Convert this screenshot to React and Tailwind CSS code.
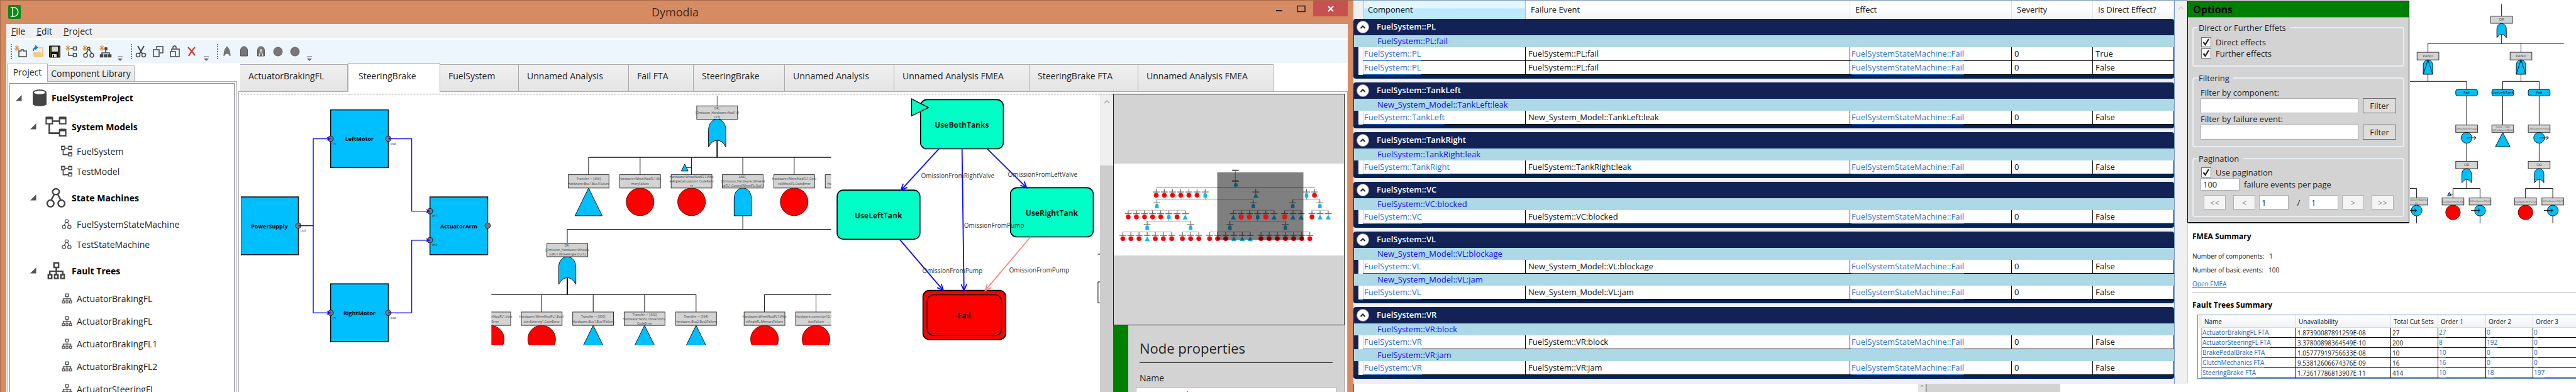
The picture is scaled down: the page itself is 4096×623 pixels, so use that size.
import React from "react";

/* ---------- shared data ---------- */

const ZOOM = 0.8312;
const z = (v) => Math.round(v * ZOOM * 10) / 10;

const INK = "#111111";
const SKY = "#00bfff";
const MINT = "#00ffc6";

/* ---------- small icons ---------- */

function ModelIcon({ size, weight = 1.5 }) {
  return (
    <svg width={size} height={size} viewBox="0 0 24 24" fill="none" stroke="#444" strokeWidth={weight}>
      <path d="M8 6h8M4.500 9v10.500h11.500" strokeWidth={weight + 0.3} />
      <path d="M1 2h7v7H1zM16 2h7v7h-7zM16 15.500h7v7h-7z" fill="#fff" />
      <path d="M1 2.500h7M16 2.500h7M16 16h7" strokeWidth={weight + 1.4} />
    </svg>
  );
}

function StateIcon({ size, weight = 1.8 }) {
  return (
    <svg width={size} height={size} viewBox="0 0 24 24" fill="none" stroke="#444" strokeWidth={weight}>
      <path d="M10 8 6 15.500M14 8l4 7.500" />
      <ellipse cx="12" cy="5" rx="4" ry="3.500" />
      <circle cx="5.500" cy="19" r="4" />
      <circle cx="18.500" cy="19" r="4" />
    </svg>
  );
}

function FaultIcon({ size, weight = 1.8 }) {
  return (
    <svg width={size} height={size} viewBox="0 0 24 24" fill="none" stroke="#444" strokeWidth={weight}>
      <path d="M9 1.500h6v6H9zM12 7.500v9M3.500 17v-4.500h17V17" />
      <path d="M1.500 17h4.500v5H1.500zM9.750 17h4.500v5h-4.500zM18 17h4.500v5H18z" />
    </svg>
  );
}

function Spark() {
  return <path d="M4 0v9M0 4.500h8M1 1.500l6 6M7 1.500l-6 6" stroke="#e0922f" strokeWidth="1.100" fill="none" />;
}

function ToolSvg({ children }) {
  return (
    <svg width="20" height="20" viewBox="0 0 20 20" fill="none" stroke="#444" strokeWidth="1.500">
      {children}
    </svg>
  );
}

const fileTools = [
  ["New project", <><path d="M7 9h3.500v-2h3.500v2h5v9H7z" /><Spark /></>],
  ["Open project", <><path d="M2 11h13l3 8H4z" fill="#f6c98b" stroke="none" /><path d="M11 4h7v14" stroke="#f6c98b" strokeWidth="2" /><path d="M3 9c0-4 2-5.500 5-5.500M6 .5l3 3-3 3" stroke="#1f6fb5" strokeWidth="2" /></>],
  ["Save", <><path d="M1.500 1h17v18h-17z" fill="#111" stroke="#111" strokeWidth="1" /><path d="M3 2v16M17 2v16" stroke="#8a8a1c" strokeWidth="1" /><path d="M5 2h10v8H5z" fill="#d8d8d8" stroke="none" /><path d="M6 14h7v5H6z" fill="#ddd" stroke="none" /><path d="M7 15h2v4H7z" fill="#111" stroke="none" /></>],
  ["New system model", <><path d="M5 10v6h7M8 5h4" /><path d="M12.500 2.500h5v5h-5zM12.500 13h5v5h-5z" /><Spark /></>],
  ["New state machine", <><path d="M9 8l-3 5M11 7l4 6" /><circle cx="10" cy="5" r="2" /><circle cx="5" cy="16" r="3" /><circle cx="15" cy="16" r="3" /><Spark /></>],
  ["New fault tree", <><path d="M10 3v9M4 15v-3h12v3" /><path d="M1.500 15h4v3.500h-4zM8 15h4v3.500H8zM14.500 15h4v3.500h-4zM9 4h3v3H9z" fill="#444" /><Spark /></>],
];

const editTools = [
  ["Cut", <><path d="M5 1l7 12M15 1L8 13" strokeWidth="2" /><circle cx="5.500" cy="15.500" r="3" /><circle cx="14.500" cy="15.500" r="3" /></>],
  ["Copy", <><path d="M8 6V2h10v10h-5" /><path d="M3 7h9v11H3z" /></>],
  ["Paste", <><path d="M7 5V3.500a2.500 2.500 0 0 1 5 0V5M5 9V6h12v12h-5M3 10h8v8H3z" /></>],
  ["Delete", <path d="M4 3c4 4 7 8 11 13M15 3C11 7 8 12 5 17" stroke="#c0392b" strokeWidth="2.200" />],
];

const gateTools = [
  ["OR gate", <path d="M10 2c4 4 5 9 5 15-1.500-3-3-4-5-4s-3.500 1-5 4c0-6 1-11 5-15z" fill="#777" stroke="#666" strokeWidth="1" />],
  ["AND gate", <path d="M4.500 17V8c0-4 3-6 5.500-6s5.500 2 5.500 6v9z" fill="#777" stroke="#555" strokeWidth="1" />],
  ["PAND gate", <><path d="M4.500 17V8c0-4 3-6 5.500-6s5.500 2 5.500 6v9z" fill="#777" stroke="#555" strokeWidth="1" /><path d="M7 17l3-11 3 11" stroke="#fff" strokeWidth="1" /></>],
  ["Basic event", <circle cx="10" cy="10" r="7" fill="#777" stroke="#666" strokeWidth="1" />],
  ["Output event", <circle cx="10" cy="10" r="7" fill="#777" stroke="#666" strokeWidth="1" />],
];

function Grip() {
  return <span className="h-6 border-l-2 border-dotted border-[#777]" />;
}

function ToolGroup({ tools }) {
  return (
    <div className="flex items-center pl-[7px]">
      <Grip />
      <div className="flex">
        {tools.map(([name, art]) => (
          <button key={name} aria-label={name} className="flex h-7 w-[27px] items-center justify-center">
            <ToolSvg>{art}</ToolSvg>
          </button>
        ))}
      </div>
      <button aria-label="More tools" className="flex h-[34px] w-5 items-end justify-center">
        <svg width="10" height="10" viewBox="0 0 10 10">
          <path d="M1 1h8" stroke="#666" />
          <path d="M1 4h8l-4 4z" fill="#666" />
        </svg>
      </button>
    </div>
  );
}

/* ---------- project tree ---------- */

function Arrow() {
  return (
    <svg width="10" height="10" viewBox="0 0 10 10" className="shrink-0">
      <path d="M9.500 0v9.500H0z" fill="#555" />
    </svg>
  );
}

function TreeGroup({ icon, label, items, itemIcon, head = "h-[52px]", row = "h-8" }) {
  return (
    <li>
      <div className={`flex items-center pl-[32px] ${head}`}>
        <Arrow />
        <span className="ml-2.5 flex w-[42px] justify-center">{icon}</span>
        <span className="ml-1 font-bold text-black">{label}</span>
      </div>
      <ul>
        {items.map((item, i) => (
          <li key={i} className={`flex items-center pl-[80px] ${row}`}>
            <span className="flex w-5 justify-center">{itemIcon}</span>
            <span className="ml-[6px]">{item}</span>
          </li>
        ))}
      </ul>
    </li>
  );
}

function Sidebar() {
  return (
    <aside className="flex w-[367px] shrink-0 flex-col overflow-hidden pl-px pt-px">
      <div role="tablist" className="z-10 -mb-px flex items-end">
        <button role="tab" aria-selected="true" className="h-[29px] w-[65px] border border-b-0 border-[#acacac] bg-white pb-1">Project</button>
        <button role="tab" aria-selected="false" className="h-[26px] w-[138px] border border-l-0 border-[#acacac] bg-gradient-to-b from-[#f0f0f0] to-[#e5e5e5] pb-0.5">Component Library</button>
      </div>
      <div className="min-h-0 flex-1 border border-b-0 border-[#acacac] px-[3px] pt-[2px]">
        <div className="h-full overflow-hidden border border-b-0 border-[#828790]">
          <div className="flex h-[45px] items-center pl-[9px]">
            <Arrow />
            <svg width="26" height="28" viewBox="0 0 26 28" className="ml-[15px] shrink-0">
              <path d="M2 5v18c0 5 22 5 22 0V5z" fill="#444" />
              <ellipse cx="13" cy="5" rx="10" ry="3.800" fill="#fff" stroke="#444" strokeWidth="2" />
            </svg>
            <span className="ml-1.5 font-bold text-black">FuelSystemProject</span>
          </div>
          <ul>
            <TreeGroup head="h-[46px]" icon={<ModelIcon size={34} />} itemIcon={<ModelIcon size={18} weight={1.8} />} label="System Models" items={["FuelSystem", "TestModel"]} />
            <TreeGroup icon={<StateIcon size={32} />} itemIcon={<StateIcon size={16} />} label="State Machines" items={["FuelSystemStateMachine", "TestStateMachine"]} />
            <TreeGroup
              row="h-9"
              icon={<FaultIcon size={29} weight={2} />}
              itemIcon={<FaultIcon size={17} />}
              label="Fault Trees"
              items={["ActuatorBrakingFL", "ActuatorBrakingFL", "ActuatorBrakingFL1", "ActuatorBrakingFL2", "ActuatorSteeringFL"]}
            />
          </ul>
        </div>
      </div>
    </aside>
  );
}

/* ---------- diagrams ---------- */

function Label({ x, y, lines, size = "text-[5px]", gap = 6, bold, anchor = "middle", fill = "#333" }) {
  return lines.map((line, i) => (
    <text
      key={i}
      x={z(x)}
      y={z(y) + (i - (lines.length - 1) / 2) * gap}
      textAnchor={anchor}
      dominantBaseline="central"
      fill={fill}
      className={bold ? `${size} font-bold` : size}
    >
      {line}
    </text>
  ));
}

const line = (...pts) => pts.map(([x, y], i) => `${i ? "L" : "M"}${z(x)} ${z(y)}`).join("");

function Wire({ pts, color = INK, width = 1 }) {
  return <path d={line(...pts)} fill="none" stroke={color} strokeWidth={width} />;
}

function Tri({ x, y, w, h }) {
  return <path d={line([x, y], [x + w, y + h], [x - w, y + h]) + "Z"} fill={SKY} stroke={INK} />;
}

function Gate({ kind, x, y, w, h }) {
  const l = z(x - w), r = z(x + w), t = z(y), b = z(y + h), sh = z(y + h * 0.4), cx = z(x);
  const foot = kind === "or" ? `Q${z(x + w * 0.6)} ${z(y + h * 0.76)} ${cx} ${z(y + h * 0.76)}Q${z(x - w * 0.6)} ${z(y + h * 0.76)} ${l} ${b}` : `L${l} ${b}`;
  return (
    <g stroke={INK} fill={SKY}>
      <path d={`M${l} ${b}V${sh}C${l} ${z(y + h * 0.13)} ${z(x - w * 0.5)} ${t} ${cx} ${t}S${r} ${z(y + h * 0.13)} ${r} ${sh}V${b}${foot}Z`} />
      {kind === "pand" && <path d={`M${l} ${b}L${cx} ${t}L${r} ${b}`} fill="none" />}
    </g>
  );
}

function Box({ x, y, w, h, lines, size, gap }) {
  return (
    <g>
      <rect x={z(x - w / 2)} y={z(y)} width={z(w)} height={z(h)} fill="#d3d3d3" stroke="#333" />
      <Label x={x} y={y + h / 2} lines={lines} size={size} gap={gap} fill="#444" />
    </g>
  );
}

function ModelBlock({ x, y, name }) {
  return (
    <g>
      <rect x={z(x)} y={z(y)} width={z(110.4)} height={z(110.4)} fill={SKY} stroke="#111" strokeWidth="1.500" />
      <Label x={x + 55} y={y + 55.500} lines={[name]} size="text-[9px]" bold fill="#000" />
    </g>
  );
}

function Port({ x, y, name, arrow }) {
  return (
    <g>
      <circle cx={z(x)} cy={z(y)} r="4.400" fill="#777" stroke="#111" />
      {arrow && <path d={line([x - 8, y - 4], [x + 1, y], [x - 8, y + 4], [x - 5, y]) + "Z"} fill="#1414f0" />}
      <Label x={x + 4} y={y + 9} lines={[name]} size="text-[6px]" anchor="start" />
    </g>
  );
}

function SystemModel() {
  const blue = "#1414f0";
  return (
    <g>
      <ModelBlock x={460.4} y={376.600} name="PowerSupply" />
      <ModelBlock x={632.500} y={210} name="LeftMotor" />
      <ModelBlock x={632.500} y={542.700} name="RightMotor" />
      <ModelBlock x={822.500} y={376.600} name="ActuatorArm" />
      <Port x={570.700} y={431.600} name="out" />
      <Port x={632.500} y={265.300} name="in" arrow />
      <Port x={742.900} y={265.300} name="out" />
      <Port x={632.500} y={598} name="in" arrow />
      <Port x={742.900} y={598} name="out" />
      <Port x={822.500} y={403.700} name="in1" arrow />
      <Port x={822.500} y={459.200} name="in2" arrow />
      <Port x={932.900} y={431.600} name="" />
      <Wire color={blue} width={1.4} pts={[[570.7, 431.6], [599.3, 431.6]]} />
      <Wire color={blue} width={1.4} pts={[[632, 265.3], [599.3, 265.3], [599.3, 598], [632, 598]]} />
      <Wire color={blue} width={1.4} pts={[[742.9, 265.3], [787.5, 265.3], [787.5, 403.7], [822, 403.7]]} />
      <Wire color={blue} width={1.4} pts={[[742.9, 598], [787.5, 598], [787.5, 459.2], [822, 459.2]]} />
    </g>
  );
}

function TreeEvent({ kind, x, y, lines }) {
  return (
    <g>
      {kind === "basic" && <circle cx={z(x)} cy={z(y + 52)} r={z(26.500)} fill="#ff0000" stroke="#600" />}
      {kind === "transfer" && <Tri x={x} y={y + 25.500} w={26} h={53} />}
      {(kind === "or" || kind === "and") && <Gate kind={kind} x={x} y={y + 25.500} w={16.500} h={53} />}
      <Box x={x} y={y} w={78} h={25.500} lines={lines} gap={lines.length > 2 ? 7 : 8} />
    </g>
  );
}

const faultRow = [
  ["transfer", 1126, ["Transfer -> [306]", "Hardware::Bus1.Bus1Failure"]],
  ["basic", 1224.5, ["Hardware::WheelNodFL1.Me", "moryFailure"]],
  ["basic", 1322.9, ["Hardware::WheelNodFL1.Whe", "elAngleCalculation1.CodeFailu", "re"]],
  ["and", 1420.9, ["AND_", "[Omission_Hardware::WheelN", "odFL1.ControlWheelFL.Out1]"]],
  ["basic", 1519.3, ["Hardware::WheelNodFL1.Cont", "rolWheelFL.CodeError"]],
  ["basic", 1617.7, ["", "Hardware::WheelNodFL1"]],
];

const faultLeaves = [
  ["basic", 937.9, ["Hardware::WheelNodFL1.Vote", "r.CodeError"]],
  ["basic", 1036.2, ["Hardware::WheelNodFL1.BusV", "oterSteering1.CodeError"]],
  ["transfer", 1134.7, ["Transfer -> [306]", "Hardware::Bus1.Bus1Failure"]],
  ["transfer", 1233, ["Transfer -> [332]", "Hardware::Nod2.conversion2.", "CodeError"]],
  ["transfer", 1331.6, ["Transfer -> [334]", "Hardware::Bus2.Bus2Failure"]],
  ["basic", 1462.5, ["Hardware::WheelNodFL1.Whe", "elAngleFL.MemoryFailure"]],
  ["basic", 1561, ["Hardware::conection12.Con", "tionFailure"]],
];

function FaultTree() {
  return (
    <g clipPath="url(#fault-clip)">
      <clipPath id="fault-clip">
        <rect x={z(940)} y={z(183)} width={z(650)} height={z(477)} />
      </clipPath>
      <Wire pts={[[1371.900, 183], [1371.900, 203]]} color="#555" />
      <Wire pts={[[1126, 300.800], [1600, 300.800]]} width={1.300} />
      {faultRow.map(([kind, x, lines]) => (
        <g key={x}>
          <Wire pts={[[x, 300.8], [x, 334]]} />
          <TreeEvent kind={kind} x={x} y={334} lines={lines} />
        </g>
      ))}
      <TreeEvent kind="or" x={1371.900} y={202.500} lines={["OR_", "[Omission_Hardware::Nod1.O", "ut3]"]} />
      <Wire pts={[[1371.900, 268], [1371.900, 300.800]]} width={2} />
      <Wire pts={[[1309.900, 320.700], [1322.900, 320.700]]} />
      <Tri x={1309.900} y={314} w={6.500} h={13} />
      <Wire pts={[[1420.9, 412.500], [1420.9, 438.600]]} />
      <Wire pts={[[1600, 438.6], [1085.2, 438.6], [1085.2, 465]]} />
      <TreeEvent kind="or" x={1085.200} y={465.300} lines={["OR_", "[Omission_Hardware::WheelN", "odFL1.WheelAngle.Out1]"]} />
      <Wire pts={[[1085.200, 531], [1085.200, 563.300]]} width={2} />
      <Wire pts={[[930, 563.300], [1331.600, 563.300]]} width={1.300} />
      <Wire pts={[[1462.500, 563.300], [1600, 563.300]]} width={1.300} />
      {faultLeaves.map(([kind, x, lines]) => (
        <g key={x}>
          <Wire pts={[[x, 563.3], [x, 597]]} />
          <TreeEvent kind={kind} x={x} y={596.600} lines={lines} />
        </g>
      ))}
    </g>
  );
}

function Edge({ from, to, color = "#0a0af5" }) {
  const a = Math.atan2(to[1] - from[1], to[0] - from[0]);
  const barb = (d) => [to[0] - 13 * Math.cos(a + d), to[1] - 13 * Math.sin(a + d)];
  return (
    <g fill="none" stroke={color} strokeWidth="1.800">
      <path d={line(from, to)} />
      <path d={line(barb(0.42), to, barb(-0.42))} />
    </g>
  );
}

function StateBox({ x, y, name, fail }) {
  return (
    <g>
      <rect x={z(x)} y={z(y)} width={z(158.400)} height={z(94)} rx="10" fill={fail ? "#ff0000" : MINT} stroke="#000" strokeWidth="1.600" />
      {fail && <rect x={z(x + 8)} y={z(y + 8.400)} width={z(142.300)} height={z(77.700)} rx="10" fill="none" stroke="#000" strokeWidth="1.600" />}
      <Label x={x + 79} y={y + 48} lines={[name]} size="text-[12px]" bold fill="#0a1a14" />
    </g>
  );
}

function StateMachine() {
  return (
    <g>
      <StateBox x={1761} y={190.600} name="UseBothTanks" />
      <StateBox x={1601.400} y={363.500} name="UseLeftTank" />
      <StateBox x={1933} y={359} name="UseRightTank" />
      <StateBox x={1765.600} y={555.300} name="Fail" fail />
      <path d={line([1743.900, 189], [1776.300, 205.900], [1743.900, 221.600]) + "Z"} fill={MINT} stroke="#000" strokeWidth="1.300" />
      <Edge from={[1795.9, 284.7]} to={[1723.6, 363.5]} />
      <Edge from={[1840.3, 284.7]} to={[1844.1, 555.3]} />
      <Edge from={[1888.6, 284.7]} to={[1964, 359]} />
      <Edge from={[1720.9, 457.5]} to={[1804.5, 555.5]} />
      <Edge from={[1971.5, 453]} to={[1884.8, 555.5]} color="#fa8484" />
      <Label x={1761.800} y={335.600} lines={["OmissionFromRightValve"]} size="text-[10px]" anchor="start" />
      <Label x={1927.800} y={333} lines={["OmissionFromLeftValve"]} size="text-[10px]" anchor="start" />
      <Label x={1844} y={431} lines={["OmissionFromPump"]} size="text-[10px]" anchor="start" />
      <Label x={1764.200} y={517.800} lines={["OmissionFromPump"]} size="text-[10px]" anchor="start" />
      <Label x={1930.200} y={516} lines={["OmissionFromPump"]} size="text-[10px]" anchor="start" />
    </g>
  );
}

/* ---------- overview map ---------- */

const mapNodes = {
  779: { basic: [364, 411, 458, 505, 552, 599, 1275], gate: [646, 1229], tri: [937] },
  822: { basic: [], gate: [368, 923, 1150, 1306], tri: [] },
  866: { basic: [203, 250, 297, 343, 390, 484, 853, 901, 995, 1103, 1260], gate: [437, 948], tri: [531, 808, 1042, 1151, 1198, 1307, 1354] },
  909: { basic: [], gate: [312, 562, 788, 1107], tri: [] },
  953: { basic: [172, 218, 265, 359, 405, 453, 515, 562, 609, 671, 717, 764, 967, 1014, 1061, 1108, 1155, 1202, 1248], gate: [], tri: [312, 811, 859, 905] },
};
const mapRails = [
  [364, 1277, 749], [368, 923, 796], [1150, 1307, 796], [203, 531, 839], [808, 1042, 839], [1103, 1198, 839],
  [1260, 1354, 839], [312, 562, 883], [790, 1108, 883], [172, 453, 926], [515, 609, 926], [671, 905, 926], [967, 1248, 926],
];
const mx = (v) => Math.round((v - 120) * 2.7707) / 10;
const my = (v) => Math.round((v - 652) * 3.975) / 10;

function OverviewMap() {
  return (
    <svg viewBox="0 0 367 147" className="block w-full bg-white" role="img" aria-label="Overview">
      {mapRails.map(([a, b, y], i) => (
        <path key={i} d={`M${mx(a)} ${my(y)}H${mx(b)}`} stroke="#777" strokeWidth={i ? 0.6 : 0.9} />
      ))}
      <path d={`M${mx(820)} ${my(679)}V${my(749)}M${mx(647)} ${my(780)}V${my(796)}M${mx(1229)} ${my(780)}V${my(796)}M${mx(437)} ${my(866)}V${my(883)}M${mx(948)} ${my(866)}V${my(883)}`} stroke="#777" strokeWidth="0.800" />
      <path d={`M${mx(801)} ${my(679)}H${mx(839)}M${mx(801)} ${my(722)}H${mx(839)}`} stroke="#555" strokeWidth="2" />
      <path d={`M${mx(811)} ${my(744)}v-4q3-4 6 0v4z`} fill="#18b4ee" />
      {Object.entries(mapNodes).map(([row, kinds]) => {
        const y = Number(row);
        return (
          <g key={row}>
            {[...kinds.basic, ...kinds.gate, ...kinds.tri].map((x) => (
              <path key={x} d={`M${mx(x) - 5.5} ${my(y - 13)}h11M${mx(x)} ${my(y - 26)}v6`} stroke="#666" strokeWidth="1.200" />
            ))}
            {kinds.gate.map((x) => (
              <path key={x} d={`M${mx(x) - 2.8} ${my(y + 9)}v-5q2.800-5 5.600 0v5z`} fill="#18b4ee" />
            ))}
            {kinds.tri.map((x) => (
              <path key={x} d={`M${mx(x)} ${my(y - 10)}l4 8h-8z`} fill="#18b4ee" />
            ))}
            {kinds.basic.map((x) => (
              <circle key={x} cx={mx(x)} cy={my(y)} r="3.800" fill="#ff0000" />
            ))}
          </g>
        );
      })}
      <rect x={mx(715)} y={my(687)} width="137.400" height="108.100" fill="#000" fillOpacity="0.500" />
      {[853, 901, 995, 1103].map((x) => (
        <circle key={x} cx={mx(x)} cy={my(866)} r="3.800" fill="#f01010" />
      ))}
    </svg>
  );
}

/* ---------- modelling window ---------- */

const docTabs = [
  ["ActuatorBrakingFL", "w-[171px]"],
  ["SteeringBrake", "w-[147px]"],
  ["FuelSystem", "w-[125px]"],
  ["Unnamed Analysis", "w-[175px]"],
  ["Fail FTA", "w-[103px]"],
  ["SteeringBrake", "w-[145px]"],
  ["Unnamed Analysis", "w-[174px]"],
  ["Unnamed Analysis FMEA", "w-[215px]"],
  ["SteeringBrake FTA", "w-[173px]"],
  ["Unnamed Analysis FMEA", "w-[215px]"],
];

function Inspector() {
  return (
    <div className="flex w-[372px] shrink-0 flex-col pr-1">
      <div className="flex h-[368px] shrink-0 flex-col justify-center border border-[#222] bg-[#d3d3d3]">
        <OverviewMap />
      </div>
      <div className="min-h-0 flex-1 overflow-hidden border-l-[24px] border-r border-r-[#999] border-l-[#008000] bg-[#d3d3d3] pl-3 pr-3 pt-5">
        <h2 className="mx-1.5 border-b-2 border-[#555] pb-1.5 text-[22px] leading-[32px] text-[#222]">Node properties</h2>
        <label htmlFor="node-name" className="ml-1.5 mt-3.5 block text-[14px] leading-5">Name</label>
        <input id="node-name" defaultValue="SteeringBrake" className="mt-1 h-6 w-full border border-[#abadb3] bg-white px-[3px]" />
      </div>
    </div>
  );
}

function Workspace() {
  return (
    <main className="ml-[2px] flex min-w-0 flex-1 flex-col">
      <div role="tablist" className="z-10 -mb-px flex h-[46px] shrink-0 items-end pl-[3px]">
        {docTabs.map(([name, width], i) => (
          <button
            key={i}
            role="tab"
            aria-selected={i === 1}
            className={
              i === 1
                ? `h-[46px] shrink-0 border border-b-0 border-[#acacac] bg-white pb-1.5 pl-4 text-left ${width}`
                : `h-[44px] shrink-0 border border-l-0 border-[#acacac] bg-gradient-to-b from-[#f0f0f0] to-[#e4e4e4] pb-2 pl-[13px] text-left ${width}`
            }
          >
            {name}
          </button>
        ))}
      </div>
      <div className="flex min-h-0 flex-1 border border-b-0 border-[#acacac] pt-[3px]">
        <div className="ml-[3px] min-w-0 flex-1 overflow-hidden border-t border-dashed border-[#777]">
          <svg width="1368" height="474" viewBox="383 150 1368 474" role="img" aria-label="Diagram canvas" className="block">
            <SystemModel />
            <FaultTree />
            <StateMachine />
            <path d={line([2100, 486], [2106, 486])} stroke="#000" />
            <path d={line([2106, 539], [2100.500, 539], [2100.500, 579], [2106, 579])} stroke="#000" fill="none" />
          </svg>
        </div>
        <div className="flex w-[21px] shrink-0 flex-col border-t border-dashed border-[#777] bg-[#efefef]">
          <div className="flex h-[113px] justify-center pt-1.5">
            <svg width="12" height="12" viewBox="0 0 12 12" fill="none" stroke="#aaa" strokeWidth="1.600"><path d="M2 8l4-4 4 4" /></svg>
          </div>
          <div className="flex-1 bg-[#cdcdcd]" />
        </div>
        <Inspector />
      </div>
    </main>
  );
}

function ModelWindow() {
  return (
    <section className="flex min-w-0 flex-[2133_1_0%] flex-col overflow-hidden border-l border-t border-[#a86a48] bg-[#d68b62] pl-[9px] pr-2 text-[14px] text-[#222]">
      <header className="flex h-[37px] shrink-0 items-start">
        <svg width="20" height="22" viewBox="0 0 20 22" className="ml-[3px] mt-[7px]">
          <rect width="20" height="22" rx="2" fill="#0b8a16" />
          <path d="M4 4h5c9 0 9 14 0 14H4M7 4v14" stroke="#fff" strokeWidth="1.500" fill="none" />
        </svg>
        <h1 className="flex-1 pl-24 pt-1 text-center text-[18px] leading-7 text-[#3a2a20]">Dymodia</h1>
        <div className="flex">
          <button aria-label="Minimise" className="flex h-[25px] w-8 items-center justify-center">
            <svg width="12" height="12" viewBox="0 0 12 12"><path d="M1 9h10" stroke="#222" strokeWidth="2" /></svg>
          </button>
          <button aria-label="Maximise" className="flex h-[25px] w-[38px] items-center justify-center">
            <svg width="14" height="12" viewBox="0 0 14 12"><path d="M1 1.500h12v9H1z" stroke="#222" strokeWidth="1.500" fill="none" /></svg>
          </button>
          <button aria-label="Close" className="flex h-[25px] w-[55px] items-center justify-center bg-[#c75050]">
            <svg width="12" height="12" viewBox="0 0 12 12"><path d="M2 2l8 8M10 2l-8 8" stroke="#fff" strokeWidth="2" /></svg>
          </button>
        </div>
      </header>
      <div className="flex min-h-0 flex-1 flex-col bg-white">
        <nav className="flex h-[23px] shrink-0 items-center gap-[18px] bg-[#f0f0f0] pl-2">
          <button><u>F</u>ile</button>
          <button><u>E</u>dit</button>
          <button><u>P</u>roject</button>
        </nav>
        <div className="mt-[2px] flex h-[37px] shrink-0 items-center bg-[#edf5fd]">
          <ToolGroup tools={fileTools} />
          <ToolGroup tools={editTools} />
          <ToolGroup tools={gateTools} />
        </div>
        <div className="flex min-h-0 flex-1">
          <Sidebar />
          <Workspace />
        </div>
      </div>
    </section>
  );
}

/* ---------- failure modes table ---------- */

const fmea = [
  ["FuelSystem::PL", [["FuelSystem::PL:fail", ["True", "False"]]]],
  ["FuelSystem::TankLeft", [["New_System_Model::TankLeft:leak", ["False"]]]],
  ["FuelSystem::TankRight", [["FuelSystem::TankRight:leak", ["False"]]]],
  ["FuelSystem::VC", [["FuelSystem::VC:blocked", ["False"]]]],
  ["FuelSystem::VL", [["New_System_Model::VL:blockage", ["False"]], ["New_System_Model::VL:jam", ["False"]]]],
  ["FuelSystem::VR", [["FuelSystem::VR:block", ["False"]], ["FuelSystem::VR:jam", ["False"]]]],
];

function CellLink({ children }) {
  return (
    <a href="#" className="-mb-px inline-block h-[22px] border-b border-[#0a5cb8] align-top text-[#2873cf]">{children}</a>
  );
}

function FmeaGroup({ name, events }) {
  return (
    <tbody>
      <tr className="h-[26px] bg-[#122254]">
        <th colSpan={6} scope="rowgroup" className="rounded-t p-0 text-left font-semibold text-white">
          <div className="flex h-[26px] items-center">
            <button aria-label={`Collapse ${name}`} className="ml-[5px] flex h-5 w-5 items-center justify-center rounded-full border border-[#999] bg-white">
              <svg width="10" height="10" viewBox="0 0 10 10" fill="none" stroke="#222" strokeWidth="2"><path d="M1.500 7L5 3.500 8.500 7" /></svg>
            </button>
            <span className="ml-3">{name}</span>
          </div>
        </th>
      </tr>
      {events.map(([event, flags]) => (
        <React.Fragment key={event}>
          <tr className="h-[19px] bg-[#add8e6]">
            <td colSpan={6} className="h-[19px] border-l border-[#122254] p-0 pl-[37px] leading-[19px] text-[#1010ee]">{event}</td>
          </tr>
          {flags.map((flag, i) => (
            <tr key={i} className="h-[22px] bg-white leading-[21px]">
              <td className="border-l-[8px] border-r border-[#122254] border-r-[#ccc] p-0" />
              <td className="h-[22px] border-b border-r border-black p-0 pl-px"><CellLink>{name}</CellLink></td>
              <td className="border-b border-r border-black p-0 pl-1">{event}</td>
              <td className="border-b border-r border-black p-0 pl-[2px]"><CellLink>FuelSystemStateMachine::Fail</CellLink></td>
              <td className="border-b border-r border-black p-0 pl-1">0</td>
              <td className="border-b border-r border-black p-0 pl-1">{flag}</td>
            </tr>
          ))}
        </React.Fragment>
      ))}
      <tr className="h-[6px]"><td colSpan={6} className="h-[6px] rounded-b bg-[#002255] p-0" /></tr>
      <tr className="h-[6px]"><td colSpan={6} className="h-[6px] p-0" /></tr>
    </tbody>
  );
}

function FmeaPanel() {
  const head = "border-r border-[#dcdfe3] bg-gradient-to-b from-white from-40% to-[#f1f3f6] p-0 pl-2 text-left font-normal";
  return (
    <section className="flex min-w-0 flex-[1327_1_0%] flex-col overflow-hidden text-[13px] text-[#111]">
      <div className="flex border-l border-t border-[#7d9cc0] bg-[#f0f0f0]">
        <div className="min-w-0 flex-1 border-r border-[#7d9cc0] pb-[2px]">
          <table className="w-full table-fixed border-separate border-spacing-0">
            <colgroup>
              <col className="w-4" />
              <col className="w-[258px]" />
              <col />
              <col className="w-[257px]" />
              <col className="w-[129px]" />
              <col className="w-[129px]" />
            </colgroup>
            <thead>
              <tr className="h-[29px]">
                <th className="p-0" aria-label="Row" />
                <th className="border-x border-[#80c8e8] bg-gradient-to-b from-[#e3f7ff] from-40% to-[#bce9fc] to-45% p-0 pl-1.5 text-left font-normal">Component</th>
                <th className={head}>Failure Event</th>
                <th className={head}>Effect</th>
                <th className={head}>Severity</th>
                <th className={head}>Is Direct Effect?</th>
              </tr>
            </thead>
            {fmea.map(([name, events]) => (
              <FmeaGroup key={name} name={name} events={events} />
            ))}
          </table>
        </div>
        <div className="flex w-5 shrink-0 justify-center pt-1.5">
          <svg width="12" height="12" viewBox="0 0 12 12" fill="none" stroke="#ccc" strokeWidth="1.500"><path d="M2 8l4-4 4 4" /></svg>
        </div>
      </div>
      <div className="flex min-h-0 flex-1 border-l-2 border-[#d0583a] bg-white pl-[897px]">
        <div className="flex w-3 justify-center bg-[#e4e4e4]">
          <svg width="6" height="6" viewBox="0 0 6 6" fill="none" stroke="#888"><path d="M1 5l2-3 2 3" /></svg>
        </div>
        <div className="w-[214px] border-l border-black bg-[#d3d3d3]" />
      </div>
    </section>
  );
}

/* ---------- options ---------- */

function Tick({ label }) {
  return (
    <label className="flex h-[18px] items-center">
      <span className="relative ml-px flex h-4 w-4">
        <input type="checkbox" defaultChecked className="peer h-4 w-4 appearance-none border border-[#707070] bg-white" />
        <svg width="16" height="16" viewBox="0 0 16 16" fill="none" stroke="#222" strokeWidth="2.200" className="pointer-events-none absolute inset-0 hidden peer-checked:block">
          <path d="M3.500 8l3 4 5.500-9" />
        </svg>
      </span>
      <span className="ml-[7px]">{label}</span>
    </label>
  );
}

const fieldset = "rounded border-2 border-[#e9eef2] px-[11px]";

function FilterRow({ id, label }) {
  return (
    <div>
      <label htmlFor={id} className="block leading-[18px]">{label}</label>
      <div className="flex gap-[7px]">
        <input id={id} className="h-6 min-w-0 flex-1 border border-[#abadb3] bg-white px-1" />
        <button className="h-6 w-[53px] border border-[#707070] bg-[#dddddd]">Filter</button>
      </div>
    </div>
  );
}

function PageButton({ name, children }) {
  return <button aria-label={name} disabled className="h-[23px] w-[35px] border border-[#adb2b5] bg-[#f4f4f4] text-[#8a8a8a]">{children}</button>;
}

function Options() {
  return (
    <section className="w-[353px] shrink-0 border-b-2 border-[#cfcfcf]">
      <div className="h-[353px] border border-black bg-[#d3d3d3] text-[13px] leading-[18px] text-[#222]">
        <h2 className="h-[26px] border-b border-[#6fae6f] bg-[#008000] pl-2 text-[16px] font-bold leading-[26px] text-black">Options</h2>
        <div className="flex flex-col gap-[9px] px-[7px] pt-[7px]">
          <fieldset className={`${fieldset} pb-2.5 pt-[5px]`}>
            <legend className="-ml-1 pl-px pr-1.5">Direct or Further Effets</legend>
            <Tick label="Direct effects" />
            <Tick label="Further effects" />
          </fieldset>
          <fieldset className={`${fieldset} pb-2.5 pt-[5px]`}>
            <legend className="-ml-1 pl-px pr-1.5">Filtering</legend>
            <FilterRow id="by-component" label="Filter by component:" />
            <FilterRow id="by-event" label="Filter by failure event:" />
          </fieldset>
          <fieldset className={`${fieldset} pb-2.5 pt-[4px]`}>
            <legend className="-ml-1 pl-px pr-1.5">Pagination</legend>
            <Tick label="Use pagination" />
            <div className="flex items-center">
              <input id="per-page" defaultValue="100" className="h-5 w-[62px] border border-[#abadb3] bg-white px-[3px]" />
              <label htmlFor="per-page" className="ml-[7px]">failure events per page</label>
            </div>
            <div className="mt-[7px] flex items-center pl-[5px]">
              <PageButton name="First page">&lt;&lt;</PageButton>
              <span className="ml-3 mr-1.5 flex"><PageButton name="Previous page">&lt;</PageButton></span>
              <input aria-label="Current page" defaultValue="1" className="h-[23px] w-[47px] border border-[#abadb3] bg-white px-[3px]" />
              <span className="w-8 text-center">/</span>
              <input aria-label="Page count" defaultValue="1" className="h-[23px] w-[47px] border border-[#abadb3] bg-white px-[3px]" />
              <span className="ml-1.5 mr-3 flex"><PageButton name="Next page">&gt;</PageButton></span>
              <PageButton name="Last page">&gt;&gt;</PageButton>
            </div>
          </fieldset>
        </div>
      </div>
    </section>
  );
}

/* ---------- converted tree ---------- */

function OutputEvent({ x, y, side }) {
  const s = side === "in" ? x - 17 : x;
  const e = side === "in" ? x : x + 18;
  return (
    <g>
      <circle cx={z(x)} cy={z(y)} r={z(10.400)} fill={SKY} stroke={INK} />
      <Wire pts={[[s, y], [e, y]]} />
      <Wire pts={[[e - 4, y - 3.5], [e, y], [e - 4, y + 3.5]]} />
    </g>
  );
}

function StatePill({ x, name }) {
  return (
    <g>
      <rect x={z(x - 20.8)} y={z(171)} width={z(41.600)} height={z(12.500)} rx="3" fill={SKY} stroke={INK} />
      <Label x={x} y={177} lines={[name]} size="text-[6px]" fill="#000" />
    </g>
  );
}

function Branch({ x, left, right, red, out, small }) {
  return (
    <g>
      <Wire pts={[[x, 183.5], [x, 239]]} />
      <Box x={x} y={239} w={41.600} h={14} lines={["O@FuelSystem::PL[out]"]} size="text-[3px]" />
      <OutputEvent x={x} y={263.500} />
      <Wire pts={[[x, 274], [x, 309]]} />
      <Box x={x} y={308.500} w={41.600} h={14} lines={["OR"]} size="text-[6px]" />
      <Gate kind="or" x={x} y={322.500} w={9} h={27} />
      <Wire pts={[[x, 343], [x, 360.5]]} />
      <Wire pts={[[left, 379], [left, 360.5], [right, 360.5], [right, 379]]} />
      {small && <Wire pts={[[left - 7, 371], [left, 371]]} />}
      {small && <Tri x={left - 7} y={367.500} w={3.500} h={7} />}
      <circle cx={z(left)} cy={z(406)} r={z(13.900)} fill="#ff0000" stroke="#600" />
      <Box x={left} y={378.500} w={41.600} h={13.500} lines={[red]} size="text-[4px]" />
      <Box x={right} y={378.500} w={41.600} h={13.500} lines={[out]} size="text-[3px]" />
      <OutputEvent x={right} y={402.500} side="in" />
      <Wire pts={[[right, 413], [right, 427]]} />
    </g>
  );
}

function ConvertedTree() {
  return (
    <svg width="246" height="354" viewBox="3832 1 246 354" role="img" aria-label="Converted fault tree" className="ml-px shrink-0">
      <Wire pts={[[4785.500, 8], [4785.500, 31]]} />
      <Box x={4785.500} y={31} w={41.600} h={13.500} lines={["OR"]} size="text-[6px]" />
      <Gate kind="or" x={4785.500} y={45} w={9} h={27} />
      <Wire pts={[[4785.500, 66], [4785.500, 83]]} />
      <Wire pts={[[4644.600, 100], [4644.600, 83], [4904.600, 83]]} />
      <Wire pts={[[4822.500, 83], [4822.500, 100]]} />
      {[4644.6, 4822.5].map((x) => (
        <g key={x}>
          <Box x={x} y={100} w={41.600} h={14.500} lines={["PAND"]} size="text-[6px]" />
          <Gate kind="pand" x={x} y={114.500} w={9} h={27.500} />
          <Wire pts={[[x, 142], [x, 155.5]]} />
        </g>
      ))}
      <Wire pts={[[4605, 155.500], [4718.600, 155.500], [4718.600, 171]]} />
      <Wire pts={[[4787.700, 239], [4787.700, 155.500], [4857.300, 155.500], [4857.300, 171]]} />
      <StatePill x={4718.600} name="Fail" />
      <StatePill x={4787.700} name="UseLeftTank" />
      <StatePill x={4857.300} name="Fail" />
      <Tri x={4787.700} y={253.500} w={14} h={27} />
      <Box x={4787.700} y={239} w={41.600} h={14} lines={["Transfer -> [532]", "O@FuelSystem::VR[out]"]} size="text-[3px]" gap={5} />
      <Branch x={4718.600} left={4692.500} right={4744.200} red="FuelSystem::PL:fail" out="O@FuelSystem::PL[in2]" small />
      <Branch x={4857.300} left={4831.200} right={4883.400} red="FuelSystem::PL:fail" out="O@FuelSystem::PL[in1]" />
      <Wire pts={[[4605, 360.500], [4622.900, 360.500], [4622.900, 379]]} />
      <Box x={4622.900} y={378.500} w={41.600} h={13.500} lines={["New_System_Model::VL", "[in]"]} size="text-[3px]" gap={5} />
      <OutputEvent x={4622.900} y={402.500} side="in" />
      <Wire pts={[[4622.900, 413], [4622.900, 427]]} />
    </svg>
  );
}

/* ---------- summary ---------- */

const summaryRows = [
  ["ActuatorBrakingFL FTA", "1.87390087891259E-08", "27", "27", "0", "0"],
  ["ActuatorSteeringFL FTA", "3.37800898364549E-10", "200", "8", "192", "0"],
  ["BrakePedalBrake FTA", "1.05777919756633E-08", "10", "10", "0", "0"],
  ["ClutchMechanics FTA", "9.53812606674376E-09", "16", "16", "0", "0"],
  ["SteeringBrake FTA", "1.73617786813907E-11", "414", "10", "18", "197"],
];

function Summary() {
  return (
    <section className="h-[253px] shrink-0 border-l border-[#d0d0d0] pl-[7px] text-[10px] leading-[14px] text-[#111]">
      <h2 className="pt-[11px] text-[12px] font-bold leading-[18px] text-black">FMEA Summary</h2>
      <p className="mt-[15px]">Number of components:<span className="ml-2">1</span></p>
      <p className="mt-2">Number of basic events:<span className="ml-2">100</span></p>
      <p className="mt-2"><a href="#" className="text-[#2873cf] underline">Open FMEA</a></p>
      <hr className="mt-[7px] border-[#999]" />
      <h2 className="mt-2.5 text-[12px] font-bold leading-[18px] text-black">Fault Trees Summary</h2>
      <table className="ml-2 mt-1.5 w-[604px] table-fixed border-separate border-spacing-0 border border-r-0 border-[#5b87b5]">
        <colgroup>
          <col className="w-[6px]" />
          <col className="w-[150px]" />
          <col className="w-[151px]" />
          <col className="w-[75px]" />
          <col className="w-[76px]" />
          <col className="w-[75px]" />
          <col />
        </colgroup>
        <thead>
          <tr className="h-5">
            <th className="bg-[#f0f0f0] p-0" aria-label="Row" />
            {["Name", "Unavailability", "Total Cut Sets", "Order 1", "Order 2", "Order 3"].map((h) => (
              <th key={h} className="border-b border-r border-[#d8dadd] bg-gradient-to-b from-white to-[#f0f2f5] p-0 pl-1 text-left font-normal">{h}</th>
            ))}
          </tr>
        </thead>
        <tbody>
          {summaryRows.map((row) => (
            <tr key={row[0]} className="h-4">
              <td className="border-r border-[#bbb] p-0" />
              {row.map((cell, i) => (
                <td key={i} className={i === 5 ? "border-b border-black p-0 pl-px" : "border-b border-r border-black p-0 pl-px"}>
                  {i === 1 || i === 2 ? (
                    <span className="pl-px">{cell}</span>
                  ) : (
                    <a href="#" className="-mb-px block h-4 w-fit border-b border-[#0a5cb8] leading-[15px] text-[#2068c4]">{cell}</a>
                  )}
                </td>
              ))}
            </tr>
          ))}
        </tbody>
      </table>
    </section>
  );
}

export default function App() {
  return (
    <div className="flex h-screen overflow-hidden bg-white font-['Open_Sans','Noto_Sans',sans-serif]">
      <ModelWindow />
      <FmeaPanel />
      <div className="flex min-w-0 flex-[618_1_0%] flex-col overflow-hidden pt-px">
        <div className="flex">
          <Options />
          <ConvertedTree />
        </div>
        <Summary />
      </div>
    </div>
  );
}
